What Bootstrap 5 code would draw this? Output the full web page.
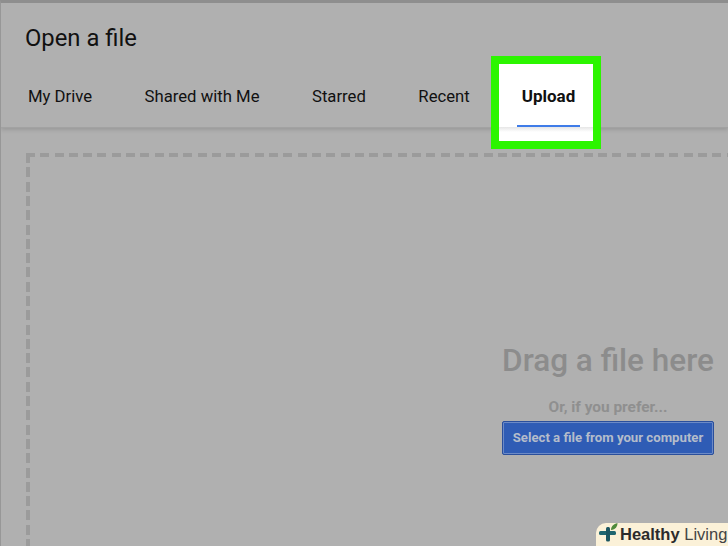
<!DOCTYPE html>
<html lang="en">
<head>
    <meta charset="UTF-8">
    <title>Open a file</title>
    <link href="https://cdn.jsdelivr.net/npm/bootstrap@5.3.0/dist/css/bootstrap.min.css" rel="stylesheet">
    <style>
        html, body {
          height: 100%;
          overflow: hidden;
        }

        body {
          background-color: #b0b0b0;
          font-family: Roboto, "Liberation Sans", sans-serif;
          color: #111;
        }

        .picker {
          position: relative;
          width: 728px;
          height: 546px;
          overflow: hidden;
          border-top: 3px solid #8e8e8e;
          border-left: 1px solid #979797;
        }

        .picker-head {
          height: 125px;
          padding: 20px 0 0 24px;
          border-bottom: 1px solid #a2a2a2;
          box-shadow: 0 2px 4px rgba(0,0,0,0.13);
        }

        .picker-title {
          font-size: 23.8px;
          line-height: 30px;
          margin: 0 0 32px;
          font-weight: 400;
        }

        .tab-row {
          gap: 52.5px;
          padding-left: 3px;
          font-size: 16.7px;
          line-height: 24px;
        }

        .drop-zone {
          height: 420px;
          margin: 25px 0 0 25px;
          padding: 189px 14px 0 0;
          background-image:
            repeating-linear-gradient(90deg, #9b9b9b 0 9px, transparent 9px 14.3px),
            repeating-linear-gradient(180deg, #9b9b9b 0 10px, transparent 10px 14.3px);
          background-size: 100% 4px, 4px 100%;
          background-repeat: no-repeat;
        }

        .drop-text {
          width: 212px;
        }

        .drag-title {
          font-size: 31.5px;
          line-height: 38px;
          font-weight: 500;
          color: #8c8c8c;
          white-space: nowrap;
        }

        .drag-or {
          font-size: 15.4px;
          line-height: 20px;
          font-weight: 700;
          color: #8f8f8f;
          margin: 17px 0 4px;
        }

        .pick-btn {
          width: 212px;
          height: 34px;
          padding: 0;
          font-size: 13.2px;
          font-weight: 700;
          color: #b4bccb;
          background-color: #2f5cb5;
          border: 1px solid #2a4f9c;
          border-radius: 2px;
          box-shadow: inset 0 0 0 1px #6c8ac6;
        }

        .upload-mark {
          position: absolute;
          left: 490px;
          top: 53px;
          width: 110px;
          height: 93px;
          background-color: #fff;
          border: 8px solid #2cf500;
          text-align: center;
          font-size: 17px;
          font-weight: 700;
          line-height: 24px;
          padding: 20px 0 0 5px;
        }

        .upload-line {
          position: absolute;
          left: 18px;
          right: 13px;
          top: 61px;
          height: 2px;
          background-color: #3f7ce8;
        }

        .upload-fade {
          position: absolute;
          left: 0;
          right: 0;
          top: 63px;
          height: 5px;
          background: linear-gradient(#e6e6e6, #fff);
        }

        .brand-tag {
          position: absolute;
          left: 596px;
          top: 523px;
          width: 132px;
          height: 23px;
          background-color: #fbf1d8;
          border-radius: 10px 0 0 0;
          font-family: "Liberation Sans", Arial, sans-serif;
          font-size: 16.5px;
          line-height: 20px;
          padding: 1px 0 0 24px;
          color: #2b2b2b;
          white-space: nowrap;
        }

        .brand-tag b {
          font-weight: 700;
        }

        .brand-tag span {
          color: #444;
        }

        .brand-icon {
          position: absolute;
          left: 3px;
          top: 0;
        }
    </style>
</head>
<body>

<div class="picker">
    <div class="picker-head">
        <h1 class="picker-title">Open a file</h1>
        <div class="d-flex tab-row">
            <div>My Drive</div>
            <div>Shared with Me</div>
            <div>Starred</div>
            <div>Recent</div>
        </div>
    </div>

    <div class="drop-zone d-flex flex-column align-items-end">
        <div class="drop-text d-flex flex-column align-items-center">
            <div class="drag-title">Drag a file here</div>
            <div class="drag-or">Or, if you prefer...</div>
            <button type="button" class="btn pick-btn">Select a file from your computer</button>
        </div>
    </div>

    <!-- highlighted tab -->
    <div class="upload-mark">
        Upload
        <div class="upload-line"></div>
        <div class="upload-fade"></div>
    </div>
</div>

<div class="brand-tag">
    <svg class="brand-icon" width="19" height="19" viewBox="0 0 19 19">
        <rect x="0" y="8" width="17" height="4" rx="1.500" fill="#1f6670"/>
        <rect x="7" y="4" width="4" height="14.500" rx="1.500" fill="#1a5560"/>
        <path d="M12 7c0-3.500 2.500-6 6.500-7 0 3.500-2 6.500-6.500 7z" fill="#4f8a3a"/>
    </svg>
    <b>Healthy</b> <span>Living</span>
</div>

</body>
</html>
